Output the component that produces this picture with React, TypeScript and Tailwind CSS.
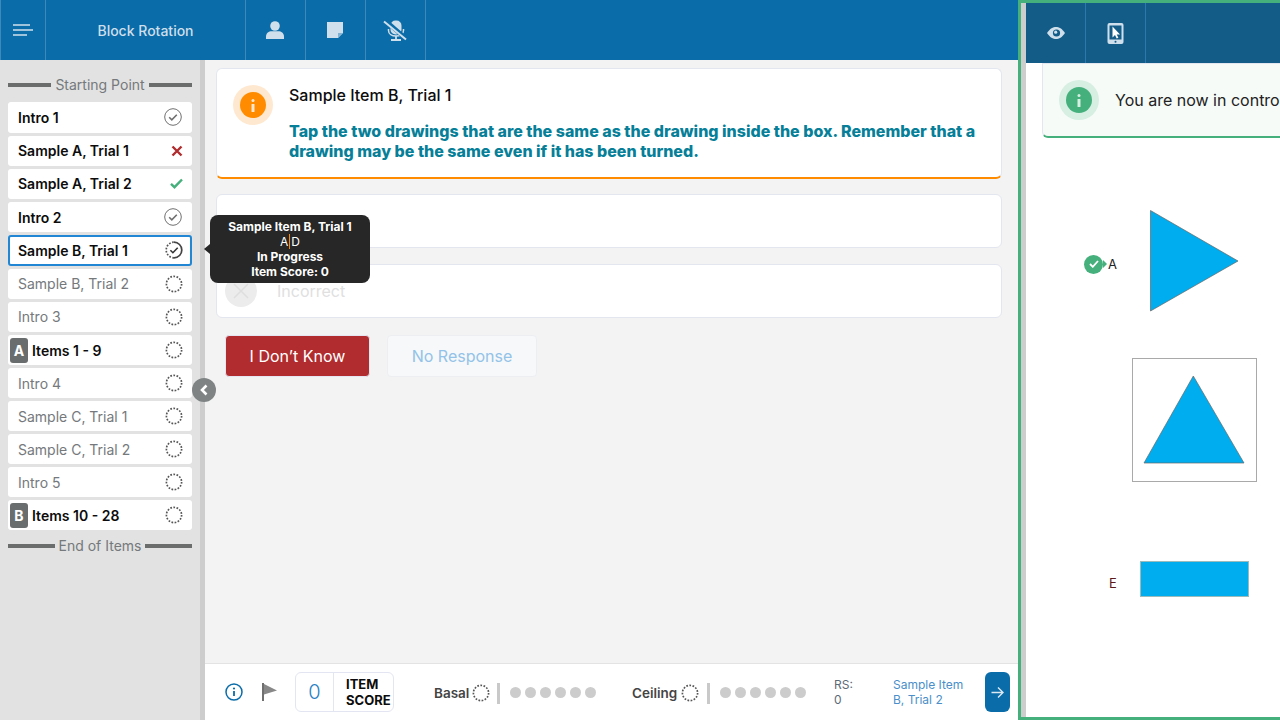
import React from "react";

const font = { fontFamily: "Inter, 'Liberation Sans', sans-serif" };

function Dashed({ size = 18, cls = "" }: { size?: number; cls?: string }) {
  return (
    <svg width={size} height={size} viewBox="0 0 18 18" className={cls}>
      <circle cx="9" cy="9" r="7.6" fill="none" stroke="#555" strokeWidth="1.700" strokeDasharray="1.700 1.480" />
    </svg>
  );
}
function CheckCircle() {
  return (
    <svg width="18" height="18" viewBox="0 0 18 18">
      <circle cx="9" cy="9" r="8.3" fill="none" stroke="#6f6f6f" strokeWidth="1" />
      <path d="M5.2 9.3l2.600 2.600 5-5.200" fill="none" stroke="#6f6f6f" strokeWidth="1.600" />
    </svg>
  );
}
function Progress() {
  return (
    <svg width="18" height="18" viewBox="0 0 18 18">
      <path d="M9 1.200a7.800 7.800 0 0 1 0 15.600" fill="none" stroke="#444" strokeWidth="1.700" />
      <path d="M9 16.800a7.800 7.800 0 0 1 0-15.600" fill="none" stroke="#555" strokeWidth="1.700" strokeDasharray="1.700 1.500" />
      <path d="M5.400 9.200l2.500 2.500 4.800-5" fill="none" stroke="#333" strokeWidth="1.600" />
    </svg>
  );
}

type Row = { label: string; bold?: boolean; icon: string; badge?: string; active?: boolean; short?: boolean };
const rows: Row[] = [
  { label: "Intro 1", bold: true, icon: "check" },
  { label: "Sample A, Trial 1", bold: true, icon: "x" },
  { label: "Sample A, Trial 2", bold: true, icon: "green" },
  { label: "Intro 2", bold: true, icon: "check" },
  { label: "Sample B, Trial 1", bold: true, icon: "progress", active: true },
  { label: "Sample B, Trial 2", icon: "dash" },
  { label: "Intro 3", icon: "dash" },
  { label: "Items 1 - 9", bold: true, icon: "dash", badge: "A" },
  { label: "Intro 4", icon: "dash", short: true },
  { label: "Sample C, Trial 1", icon: "dash", short: true },
  { label: "Sample C, Trial 2", icon: "dash", short: true },
  { label: "Intro 5", icon: "dash", short: true },
  { label: "Items 10 - 28", bold: true, icon: "dash", badge: "B", short: true },
];

function RowIcon({ kind }: { kind: string }) {
  if (kind === "check") return <div className="mr-[10px]"><CheckCircle /></div>;
  if (kind === "progress") return <div className="mr-[7px]"><Progress /></div>;
  if (kind === "dash") return <div className="mr-[9px]"><Dashed /></div>;
  if (kind === "x")
    return (
      <svg width="12" height="12" viewBox="0 0 12 12" className="mr-[9px]">
        <path d="M1.500 1.500l9 9M10.500 1.500l-9 9" stroke="#b02c2e" strokeWidth="2.400" />
      </svg>
    );
  return (
    <svg width="13" height="11" viewBox="0 0 13 11" className="mr-[9px]">
      <path d="M1 5.800l3.500 3.400L12 1.500" fill="none" stroke="#45b07c" strokeWidth="2.400" />
    </svg>
  );
}

function Heading({ text, cls }: { text: string; cls: string }) {
  return (
    <div className={`flex items-center gap-[4px] text-[14px] leading-[20px] text-[#75797c] ${cls}`}>
      <div className="h-[4px] flex-1 bg-[#6b6d6c]" />
      <span>{text}</span>
      <div className="h-[4px] flex-1 bg-[#6b6d6c]" />
    </div>
  );
}

function Sidebar() {
  return (
    <div className="relative flex w-[205px] shrink-0 flex-col border-r-[5px] border-[#cdcdcd] bg-[#e2e2e2] px-[8px]">
      <Heading text="Starting Point" cls="mt-[15px] mb-[7.3px]" />
      <div className="flex flex-col gap-[3px]">
        {rows.map((r) => (
          <div
            key={r.label}
            className={`flex items-center justify-between rounded-[3px] bg-white text-[14px] ${
              r.short ? "h-[30px]" : "h-[30.25px]"
            } ${r.active ? "border-2 border-[#2187d4]" : ""} ${
              r.bold ? "font-semibold text-[#0c0c0c]" : "text-[#75797c]"
            }`}
          >
            <div className={`flex items-center ${r.badge ? "pl-[2px]" : r.active ? "pl-[8px]" : "pl-[10px]"}`}>
              {r.badge && (
                <span className="mr-[4px] flex h-[25px] w-[18px] items-center justify-center rounded-[3px] bg-[#6a6d6d] text-[14px] font-bold text-white">
                  {r.badge}
                </span>
              )}
              {r.label}
            </div>
            <RowIcon kind={r.icon} />
          </div>
        ))}
      </div>
      <Heading text="End of Items" cls="mt-[5.7px]" />
      <div className="absolute top-[318px] left-[192px] z-10 flex h-[24px] w-[24px] items-center justify-center rounded-full bg-[#7f8384]">
        <svg width="10" height="12" viewBox="0 0 10 12">
          <path d="M7.500 1.500L3 6l4.500 4.500" fill="none" stroke="#fff" strokeWidth="2.600" />
        </svg>
      </div>
    </div>
  );
}

function HeaderCell({ children }: { children: React.ReactNode }) {
  return (
    <div className="flex h-full w-[60px] items-center justify-center border-r border-[#3d8aba] pr-[2px]">{children}</div>
  );
}

function Header() {
  return (
    <div className="flex h-[60px] shrink-0 border-l border-[#3d8aba] bg-[#0a6ca8] text-[#cfdfeb]">
      <div className="flex h-full w-[45px] items-center justify-center border-r border-[#3d8aba]">
        <svg width="20" height="12" viewBox="0 0 20 12">
          <path d="M0 1h17M0 6h20M0 11h14" stroke="#cfdfeb" strokeWidth="1.600" />
        </svg>
      </div>
      <div className="flex h-full w-[200px] items-center justify-center border-r border-[#3d8aba] text-[14px] font-medium text-[#cfdfeb]">
        Block Rotation
      </div>
      <HeaderCell>
        <svg width="18" height="18" viewBox="0 0 18 18" fill="#cfdfeb">
          <circle cx="9" cy="5" r="4.800" />
          <path d="M0 18v-2.500C0 12 3 10.300 5.500 10.300h7c2.500 0 5.500 1.700 5.500 5.200V18z" />
        </svg>
      </HeaderCell>
      <HeaderCell>
        <svg width="16" height="16" viewBox="0 0 16 16" fill="#cfdfeb">
          <path d="M0 0h16v11l-5 5H0z" />
          <path d="M11 15.500v-4.500h4.500z" fill="#7fb0d2" />
        </svg>
      </HeaderCell>
      <HeaderCell>
        <svg width="24" height="21" viewBox="0 0 24 21" fill="#cfdfeb">
          <rect x="7.500" y="0.500" width="11" height="14" rx="5" />
          <path d="M5.500 9v1.500C5.500 14 9 16 13 16s7.500-2 7.500-5.500V9" fill="none" stroke="#cfdfeb" strokeWidth="1.500" />
          <path d="M13 16v3M8 20h10" stroke="#cfdfeb" strokeWidth="1.800" />
          <path d="M1.500 0L23 18.500" stroke="#0a6ca8" strokeWidth="4.500" />
          <path d="M1 1.500L23 19.500" stroke="#cfdfeb" strokeWidth="2" />
        </svg>
      </HeaderCell>
    </div>
  );
}

function Cards() {
  return (
    <div className="flex flex-1 flex-col pt-[8px] pr-[16px] pl-[11px]">
      <div className="flex h-[111px] rounded-[6px] border border-b-2 border-[#e3e6ef] border-b-[#ff8c00] bg-white pt-[16px] pl-[16px]">
        <div className="flex h-[40px] w-[40px] shrink-0 items-center justify-center rounded-full bg-[#ffe8d0]">
          <div className="flex h-[26px] w-[26px] items-center justify-center rounded-full bg-[#ff8c00]">
            <svg width="6" height="13" viewBox="0 0 6 13" fill="#ffe8d0">
              <rect x="1.500" y="0" width="3" height="3" rx="1.500" />
              <rect x="1.500" y="5" width="3" height="8" rx="0.500" />
            </svg>
          </div>
        </div>
        <div className="ml-[16px]">
          <div className="text-[16px] leading-[20px] font-medium text-[#0c0c0c]">Sample Item B, Trial 1</div>
          <div className="mt-[16px] w-[700px] text-[16px] leading-[20px] font-extrabold text-[#077f98]">
            Tap the two drawings that are the same as the drawing inside the box. Remember that a drawing may be the same even if it has been turned.
          </div>
        </div>
      </div>
      <div className="mt-[15px] h-[54px] rounded-[6px] border border-[#e3e6ef] bg-white" />
      <div className="mt-[16px] flex h-[54px] items-center rounded-[6px] border border-[#e3e6ef] bg-white pl-[8px]">
        <div className="flex h-[32px] w-[32px] items-center justify-center rounded-full bg-[#ececec]">
          <svg width="16" height="16" viewBox="0 0 16 16">
            <path d="M1 1l14 14M15 1L1 15" stroke="#dedede" strokeWidth="1.500" />
          </svg>
        </div>
        <span className="ml-[20px] text-[16px] text-[#e0e0e0]">Incorrect</span>
      </div>
      <div className="mt-[17px] ml-[9px] flex gap-[17px]">
        <div className="flex h-[42px] w-[145px] items-center justify-center rounded-[4px] border border-[#e6e6f3] bg-[#b02c2e] text-[16px] text-white">
          I Don’t Know
        </div>
        <div className="flex h-[42px] w-[150px] items-center justify-center rounded-[4px] border border-[#eceef2] bg-[#f7f8f9] text-[16px] text-[#93c3e8]">
          No Response
        </div>
      </div>
    </div>
  );
}

function Dots() {
  return (
    <div className="flex gap-[4px]">
      {[0, 1, 2, 3, 4, 5].map((i) => (
        <div key={i} className="h-[11px] w-[11px] rounded-full bg-[#cccccc]" />
      ))}
    </div>
  );
}

function Footer() {
  return (
    <div className="flex h-[57px] shrink-0 items-center border-t border-[#e3e3e3] bg-white pl-[20px]">
      <svg width="18" height="18" viewBox="0 0 18 18">
        <circle cx="9" cy="9" r="8" fill="none" stroke="#0a6ca8" strokeWidth="1.500" />
        <circle cx="9" cy="5.500" r="1.100" fill="#0a6ca8" />
        <path d="M9 8v5" stroke="#0a6ca8" strokeWidth="1.800" />
      </svg>
      <svg width="16" height="18" viewBox="0 0 16 18" className="ml-[18px]">
        <path d="M1 0h2v18H1z" fill="#6f6f6f" />
        <path d="M3 1l13 6.500-13 4z" fill="#888" />
      </svg>
      <div className="ml-[18px] flex h-[40px] w-[99px] rounded-[6px] border border-[#e3e6f2]">
        <div className="flex w-[38px] items-center justify-center border-r border-[#e3e6f2] text-[20px] font-light text-[#2a7fc4]">
          0
        </div>
        <div className="pt-[3px] pl-[12px] text-[13px] leading-[16px] font-bold whitespace-nowrap text-[#0c0c0c]">
          ITEM
          <br />
          SCORE
        </div>
      </div>
      <span className="mt-[2px] ml-[40px] w-[35px] text-[13.500px] font-semibold whitespace-nowrap text-[#444]">Basal</span>
      <Dashed cls="mt-[2px] ml-[3px]" />
      <div className="mt-[2px] mr-[10px] ml-[7px] h-[21px] w-[3px] bg-[#c9c9c9]" />
      <Dots />
      <span className="mt-[2px] ml-[36px] w-[46px] text-[13.500px] font-semibold whitespace-nowrap text-[#444]">Ceiling</span>
      <Dashed cls="mt-[2px] ml-[3px]" />
      <div className="mt-[2px] mr-[10px] ml-[8px] h-[21px] w-[3px] bg-[#c9c9c9]" />
      <Dots />
      <div className="ml-[28px] w-[59px] text-[12px] leading-[15px] text-[#5d6b78]">
        RS:
        <br />
        0
      </div>
      <div className="w-[92px] pr-[12px] text-[12px] leading-[15px] text-[#4a8fc9]">Sample Item B, Trial 2</div>
      <div className="flex h-[40px] w-[25px] items-center justify-center rounded-[6px] bg-[#0a6ca8]">
        <svg width="13" height="13" viewBox="0 0 13 13">
          <path d="M0.500 6.500h11M7 1.500l5 5-5 5" fill="none" stroke="#dce9f2" strokeWidth="1.400" />
        </svg>
      </div>
    </div>
  );
}

function Tooltip() {
  return (
    <div className="absolute top-[215px] left-[210px] z-20 h-[68px] w-[160px] rounded-[8px] bg-[#272727] pt-[4px] text-center text-[12px] leading-[15px] font-bold text-white">
      <div className="absolute top-[29px] left-[-6px] h-0 w-0 border-y-[5px] border-r-[6px] border-y-transparent border-r-[#272727]" />
      <div>Sample Item B, Trial 1</div>
      <div className="font-normal">
        A<span className="mx-[1px] border-l border-[#ff8c00]" />D
      </div>
      <div>In Progress</div>
      <div>Item Score: 0</div>
    </div>
  );
}

function RightPanel() {
  return (
    <div className="flex h-[720px] flex-1 flex-col overflow-hidden border-[3px] border-r-0 border-[#45b07c] bg-white">
      <div className="flex flex-1 flex-col overflow-hidden border-l-[5px] border-[#cdcdcd]">
        <div className="flex h-[60px] shrink-0 bg-[#135c88]">
          <div className="flex w-[60px] items-center justify-center border-r border-[#2a78ad]">
            <svg width="18" height="12" viewBox="0 0 18 12">
              <path d="M0 6C3 1.500 6 0 9 0s6 1.500 9 6c-3 4.500-6 6-9 6S3 10.500 0 6z" fill="#cfdfeb" />
              <circle cx="9.500" cy="6" r="3.600" fill="#135c88" />
              <circle cx="8.700" cy="5.200" r="1.600" fill="#cfdfeb" />
            </svg>
          </div>
          <div className="flex w-[60px] items-center justify-center border-r border-[#2a78ad]">
            <svg width="17" height="21" viewBox="0 0 17 21">
              <rect x="0.500" y="0" width="16" height="21" rx="2" fill="#cfdfeb" />
              <rect x="2.500" y="2.500" width="12" height="14" fill="#135c88" />
              <path d="M5.500 3.500v11l2.500-2.400 1.700 3.400 1.700-.8-1.700-3.300h3.300z" fill="#fff" />
              <circle cx="8.500" cy="18.800" r="1" fill="#135c88" />
            </svg>
          </div>
        </div>
        <div className="ml-[16px] flex h-[75px] w-[300px] shrink-0 items-center rounded-b-[6px] border border-b-2 border-[#e3e6ef] border-b-[#45b07c] bg-[#f6fbf8] pl-[16px]">
          <div className="flex h-[40px] w-[40px] shrink-0 items-center justify-center rounded-full bg-[#d6efe2]">
            <div className="flex h-[26px] w-[26px] items-center justify-center rounded-full bg-[#45b07c]">
              <svg width="6" height="13" viewBox="0 0 6 13" fill="#d6efe2">
                <rect x="1.500" y="0" width="3" height="3" rx="1.500" />
                <rect x="1.500" y="5" width="3" height="8" rx="0.500" />
              </svg>
            </div>
          </div>
          <span className="ml-[16px] text-[16px] whitespace-nowrap text-[#222]">You are now in control</span>
        </div>
        <div className="flex flex-col">
          <div className="mt-[72px] flex h-[102px] items-center">
            <div className="mt-[6px] ml-[58px] flex h-[19px] w-[19px] items-center justify-center rounded-full bg-[#45b07c]">
              <svg width="10" height="8" viewBox="0 0 10 8">
                <path d="M1 4l2.800 2.800L9 1" fill="none" stroke="#fff" strokeWidth="1.800" />
              </svg>
            </div>
            <div className="mt-[6px] h-0 w-0 border-y-[4px] border-l-[4px] border-y-transparent border-l-[#45b07c]" />
            <span className="mt-[8px] ml-[1px] w-[9px] text-[13px] text-[#222]">A</span>
            <svg width="90" height="102" viewBox="0 0 90 102" className="ml-[33px]">
              <path d="M0.500 0.500L88 51 0.500 101z" fill="#00aeef" stroke="#666" strokeWidth="0.700" />
            </svg>
          </div>
          <div className="mt-[46px] ml-[106px] flex h-[124px] w-[125px] items-center justify-center border border-[#a9a9a9]">
            <svg width="103" height="90" viewBox="0 0 103 90">
              <path d="M50.300 1L101 88H1z" fill="#00aeef" stroke="#666" strokeWidth="0.700" />
            </svg>
          </div>
          <div className="mt-[79px] flex h-[36px] items-center">
            <span className="mt-[10px] ml-[83px] w-[8px] text-[13px] text-[#5a1a1a]">E</span>
            <div className="ml-[23px] h-[36px] w-[109px] border border-[#9bb] bg-[#00aeef]" />
          </div>
        </div>
      </div>
    </div>
  );
}

export default function App() {
  return (
    <div style={font} className="relative flex h-[720px] w-[1280px] overflow-hidden bg-[#f3f3f3]">
      <div className="flex w-[1018px] shrink-0 flex-col">
        <Header />
        <div className="flex min-h-0 flex-1">
          <Sidebar />
          <div className="flex flex-1 flex-col">
            <Cards />
            <Footer />
          </div>
        </div>
      </div>
      <RightPanel />
      <Tooltip />
    </div>
  );
}
